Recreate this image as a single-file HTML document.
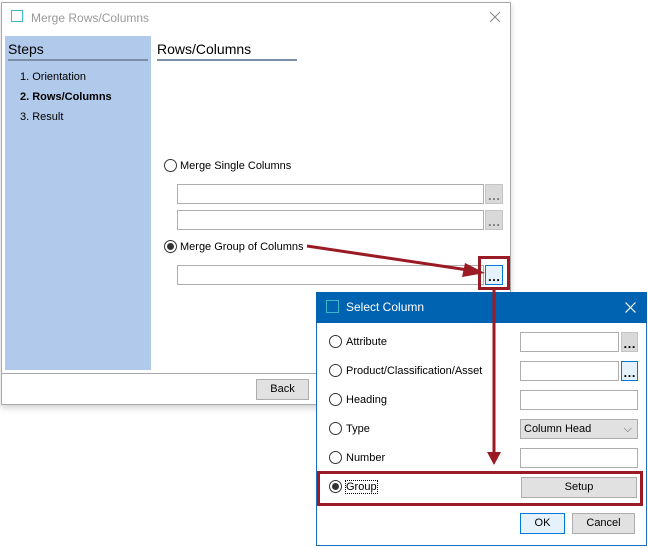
<!DOCTYPE html>
<html><head><style>
body{margin:0;width:648px;height:548px;background:#fff;position:relative;overflow:hidden;font-family:"Liberation Sans",sans-serif;font-size:11px;color:#000}
.a{position:absolute}
.tb{position:absolute;background:#fff;border:1px solid #adadad;box-sizing:border-box}
.btn{position:absolute;background:#e1e1e1;border:1px solid #adadad;box-sizing:border-box;text-align:center;font-size:11px}
.dots{position:absolute;background:#d9d9d9;border:1px solid #c4c4c4;box-sizing:border-box;text-align:center;font-size:13px;line-height:22px;color:#777;font-weight:bold;overflow:hidden}
.r{position:absolute;width:13px;height:13px;border:1px solid #333;border-radius:50%;box-sizing:border-box;background:#fff}
.r.on::after{content:"";position:absolute;left:2px;top:2px;width:7px;height:7px;border-radius:50%;background:#333}
</style></head><body>
<div class="a" style="left:1px;top:2px;width:510px;height:403px;border:1px solid #a8a8a8;box-sizing:border-box;box-shadow:0 3px 6px rgba(0,0,0,.18);background:#fff"></div>
<div class="a" style="left:11px;top:10px;width:12px;height:12px;border:1px solid #3ab7c8;box-sizing:border-box"></div>
<div class="a" style="left:31px;top:11px;font-size:12px;color:#999">Merge Rows/Columns</div>
<svg class="a" style="left:489px;top:11px" width="12" height="12"><path d="M1 1L11 11M11 1L1 11" stroke="#888" stroke-width="1"/></svg>
<div class="a" style="left:5px;top:36px;width:146px;height:334px;background:#b1c9ea"></div>
<div class="a" style="left:8px;top:41px;font-size:14px">Steps</div>
<div class="a" style="left:8px;top:59px;width:140px;height:2px;background:#7a8ea8"></div>
<div class="a" style="left:20px;top:71px">1. Orientation</div>
<div class="a" style="left:20px;top:91px;font-weight:bold">2. Rows/Columns</div>
<div class="a" style="left:20px;top:111px">3. Result</div>
<div class="a" style="left:157px;top:41px;font-size:14px">Rows/Columns</div>
<div class="a" style="left:157px;top:59px;width:140px;height:2px;background:#7a8ea8"></div>
<div class="a" style="left:2px;top:373px;width:508px;height:1px;background:#a8a8a8"></div>
<div class="btn" style="left:256px;top:379px;width:53px;height:21px;line-height:19px">Back</div>
<div class="r" style="left:164px;top:159px"></div>
<div class="a" style="left:180px;top:160px">Merge Single Columns</div>
<div class="tb" style="left:177px;top:184px;width:307px;height:20px"></div>
<div class="dots" style="left:485px;top:184px;width:18px;height:20px">…</div>
<div class="tb" style="left:177px;top:210px;width:307px;height:20px"></div>
<div class="dots" style="left:485px;top:210px;width:18px;height:20px">…</div>
<div class="r on" style="left:164px;top:240px"></div>
<div class="a" style="left:180px;top:241px">Merge Group of Columns</div>
<div class="tb" style="left:177px;top:265px;width:307px;height:20px"></div>
<div class="dots" style="left:485px;top:265px;width:18px;height:20px;background:#e5f1fb;border-color:#0078d7;color:#000">…</div>
<div class="a" style="left:316px;top:292px;width:331px;height:254px;border:1px solid #1a6fbf;box-sizing:border-box;background:#fff"></div>
<div class="a" style="left:316px;top:292px;width:331px;height:31px;background:#0063b1"></div>
<div class="a" style="left:326px;top:300px;width:13px;height:13px;border:1px solid #3ab7c8;box-sizing:border-box"></div>
<div class="a" style="left:346px;top:300px;font-size:12px;color:#fff">Select Column</div>
<svg class="a" style="left:625px;top:302px" width="11" height="11"><path d="M0.5 0.5L10.5 10.5M10.5 0.5L0.5 10.5" stroke="#fff" stroke-width="1.2"/></svg>
<div class="r" style="left:329px;top:335px"></div><div class="a" style="left:346px;top:336px">Attribute</div>
<div class="r" style="left:329px;top:364px"></div><div class="a" style="left:346px;top:365px">Product/Classification/Asset</div>
<div class="r" style="left:329px;top:393px"></div><div class="a" style="left:346px;top:394px">Heading</div>
<div class="r" style="left:329px;top:422px"></div><div class="a" style="left:346px;top:423px">Type</div>
<div class="r" style="left:329px;top:451px"></div><div class="a" style="left:346px;top:452px">Number</div>
<div class="r on" style="left:329px;top:480px"></div><div class="a" style="left:346px;top:481px;outline:1px dotted #000">Group</div>
<div class="tb" style="left:520px;top:332px;width:99px;height:20px"></div>
<div class="dots" style="left:621px;top:332px;width:17px;height:20px;color:#000">…</div>
<div class="tb" style="left:520px;top:361px;width:99px;height:20px"></div>
<div class="dots" style="left:621px;top:361px;width:17px;height:20px;background:#e5f1fb;border-color:#0078d7;color:#000">…</div>
<div class="tb" style="left:520px;top:390px;width:118px;height:20px"></div>
<div class="btn" style="left:520px;top:419px;width:118px;height:20px;text-align:left;padding-left:3px;line-height:18px">Column Head<span style="position:absolute;right:5px;top:0;color:#555">⌵</span></div>
<div class="tb" style="left:520px;top:448px;width:118px;height:20px"></div>
<div class="btn" style="left:521px;top:477px;width:116px;height:21px;line-height:19px">Setup</div>
<div class="btn" style="left:520px;top:513px;width:45px;height:21px;line-height:19px;background:#e5f1fb;border-color:#0078d7">OK</div>
<div class="btn" style="left:572px;top:513px;width:63px;height:21px;line-height:19px">Cancel</div>
<svg class="a" style="left:0;top:0" width="648" height="548">
<g stroke="#9b1b24" fill="none" stroke-width="3">
<rect x="479.5" y="257.5" width="29" height="31"/>
<rect x="318.5" y="472.5" width="323" height="32"/>
<line x1="307" y1="246" x2="468" y2="270"/>
<line x1="494" y1="289" x2="494" y2="455"/>
</g>
<polygon points="485,273 465,263 462,277" fill="#9b1b24"/>
<polygon points="487,452 501,452 494,465" fill="#9b1b24"/>
</svg>
</body></html>
